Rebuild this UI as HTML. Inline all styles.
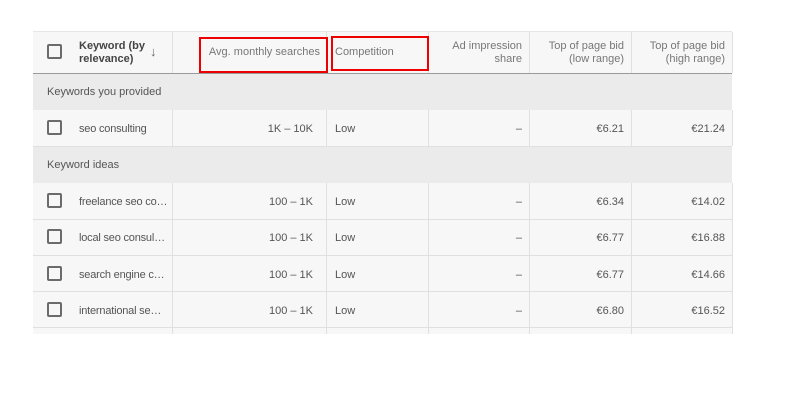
<html><head><style>
body{margin:0;width:798px;height:417px;background:#fff;font-family:"Liberation Sans",Arial,sans-serif;position:relative;overflow:hidden}
.t{position:absolute;left:33px;top:31px;width:699px;height:302px;background:#f7f7f7;border-top:1px solid #e6e6e6}
.a{position:absolute}
.vl{position:absolute;top:0;width:1px;background:#e0e0e0;height:302px}
.hl{position:absolute;left:0;width:699px;height:1px;background:#e0e0e0}
.sec{position:absolute;left:0;width:699px;height:36px;background:#ebebeb;font-size:11px;color:#555;line-height:36px;padding-left:14px;box-sizing:border-box}
.cb{position:absolute;left:14px;width:11px;height:11px;border:2px solid #6b6b6b;border-radius:2px}
.h{position:absolute;font-size:11px;color:#777;line-height:13px;text-align:right}
.c{position:absolute;font-size:11px;color:#555;line-height:36px;height:36px}
.r{text-align:right}
.k{letter-spacing:-0.2px}
.box{position:absolute;border:2px solid #e00;box-sizing:border-box}
</style></head><body>
<div class="t">
<div class="vl" style="left:139px;height:41px"></div>
<div class="vl" style="left:293px"></div>
<div class="vl" style="left:395px;height:41px"></div>
<div class="vl" style="left:496px"></div>
<div class="vl" style="left:598px"></div>
<div class="vl" style="left:699px;height:41px"></div>
<div class="vl" style="left:139px;top:78px;height:36px"></div>
<div class="vl" style="left:395px;top:78px;height:36px"></div>
<div class="vl" style="left:699px;top:78px;height:36px"></div>
<div class="vl" style="left:139px;top:151px;height:151px"></div>
<div class="vl" style="left:395px;top:151px;height:151px"></div>
<div class="vl" style="left:699px;top:151px;height:151px"></div>
<div class="hl" style="top:41px;height:2px;background:#9a9a9a"></div>
<div class="sec" style="top:42px">Keywords you provided</div>
<div class="hl" style="top:114px"></div>
<div class="sec" style="top:115px">Keyword ideas</div>
<div class="hl" style="top:187px"></div>
<div class="hl" style="top:223px"></div>
<div class="hl" style="top:259px"></div>
<div class="hl" style="top:295px"></div>
<div class="cb" style="top:12px"></div>
<div class="a" style="left:46px;top:8px;font-size:11px;font-weight:bold;color:#444;line-height:13px">Keyword (by<br>relevance)</div>
<div class="a" style="left:117px;top:12px;font-size:13px;color:#666">↓</div>
<div class="h" style="left:150px;width:137px;top:14px">Avg. monthly searches</div>
<div class="h" style="left:302px;top:14px;text-align:left">Competition</div>
<div class="h" style="left:400px;width:89px;top:8px">Ad impression<br>share</div>
<div class="h" style="left:500px;width:91px;top:8px">Top of page bid<br>(low range)</div>
<div class="h" style="left:600px;width:92px;top:8px">Top of page bid<br>(high range)</div>
</div>
<div id="rows"></div>
<div class="box" style="left:199px;top:37px;width:129px;height:36px"></div>
<div class="box" style="left:331px;top:36px;width:98px;height:35px"></div>
<script>
var d=[[109,"seo consulting","1K – 10K","€6.21","€21.24"],[182,"freelance seo co…","100 – 1K","€6.34","€14.02"],[218,"local seo consul…","100 – 1K","€6.77","€16.88"],[255,"search engine c…","100 – 1K","€6.77","€14.66"],[291,"international se…","100 – 1K","€6.80","€16.52"]];
var h="";d.forEach(function(r){var y=r[0];var ty=y+2;
h+='<div class="cb" style="left:47px;top:'+(y+11)+'px"></div>';
h+='<div class="c k" style="left:79px;top:'+ty+'px">'+r[1]+'</div>';
h+='<div class="c r" style="left:200px;width:113px;top:'+ty+'px">'+r[2]+'</div>';
h+='<div class="c" style="left:335px;top:'+ty+'px">Low</div>';
h+='<div class="c r" style="left:440px;width:82px;top:'+ty+'px">–</div>';
h+='<div class="c r" style="left:540px;width:84px;top:'+ty+'px">'+r[3]+'</div>';
h+='<div class="c r" style="left:640px;width:85px;top:'+ty+'px">'+r[4]+'</div>';});
document.getElementById("rows").innerHTML=h;
</script>
</body></html>
